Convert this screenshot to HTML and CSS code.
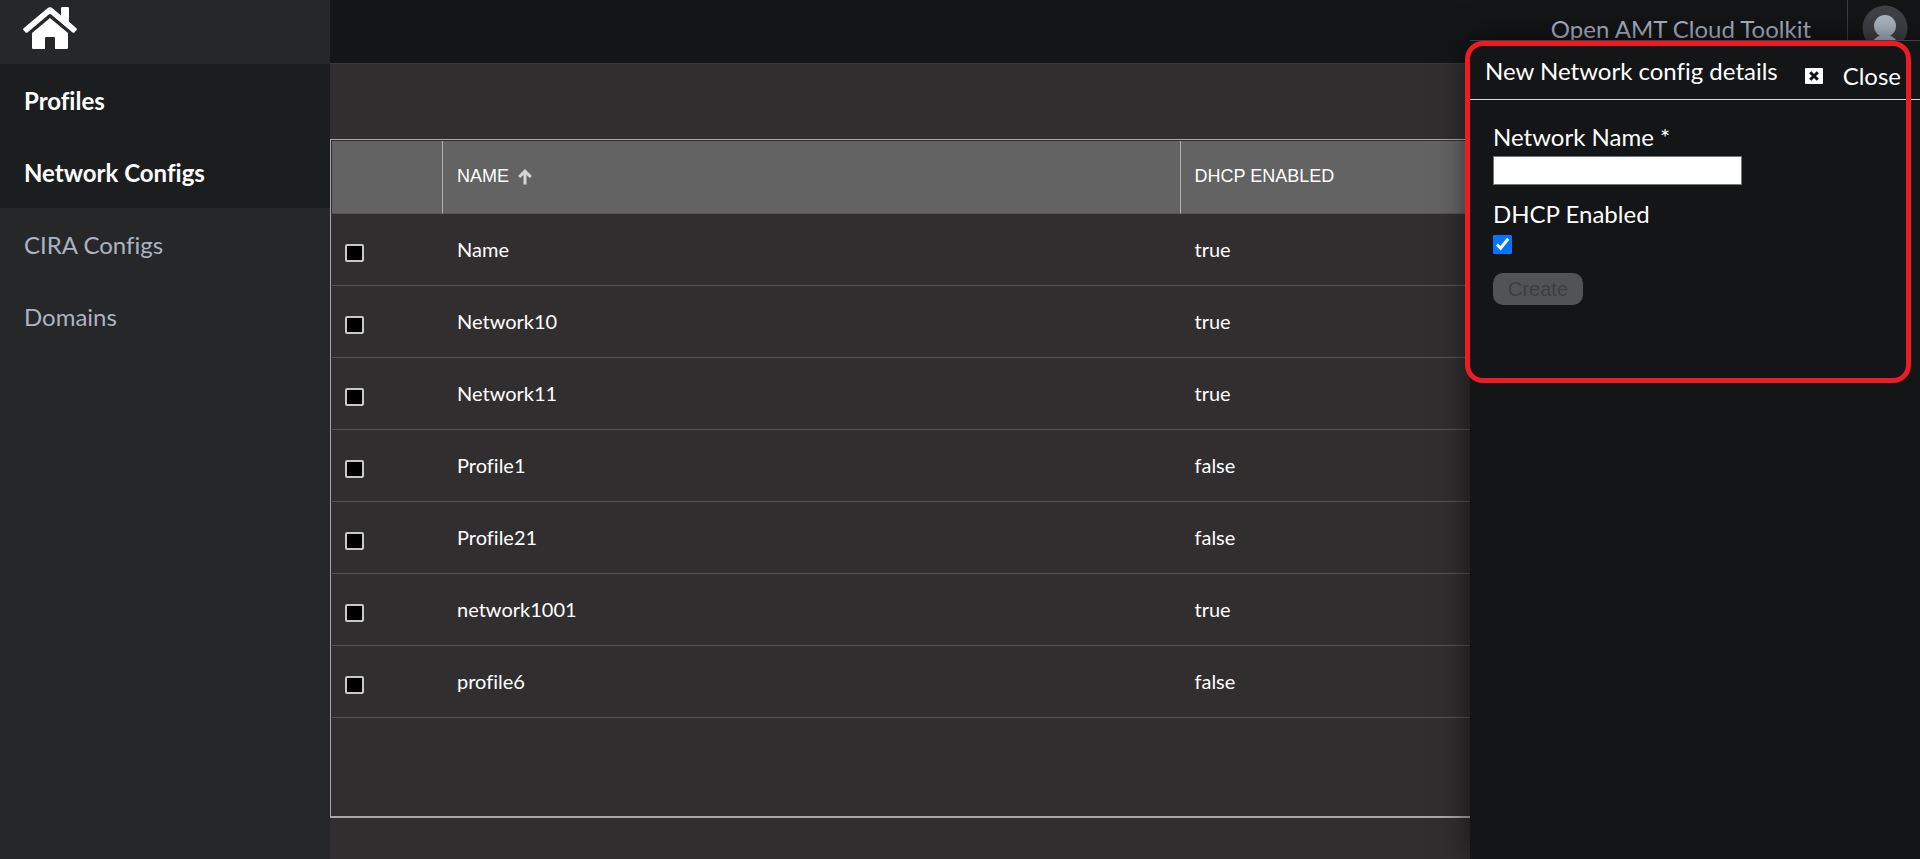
FILE: index.html
```html
<!DOCTYPE html>
<html lang="en">
<head>
<meta charset="utf-8">
<title>Open AMT Cloud Toolkit</title>
<link rel="stylesheet" href="styles.css">
</head>
<body>
<div class="app">
  <aside class="sidebar">
    <a class="home" href="#" aria-label="Home">
      <svg width="54" height="42" viewBox="0 0 54 42" fill="#fff" aria-hidden="true">
        <path d="M0.6 21.2 L24.2 1.4 Q27 -1 29.8 1.4 L38 8.4 V1.2 Q38 0 39.2 0 H44.8 Q46 0 46 1.2 V14.8 L53.4 21.2 Q54.4 22.2 53.4 23.2 L51.4 25.4 Q50.6 26.2 49.6 25.4 L28.2 7.6 Q27 6.6 25.8 7.6 L4.4 25.4 Q3.4 26.2 2.6 25.4 L0.6 23.2 Q-0.4 22.2 0.6 21.2Z"/>
        <path d="M27 11 L45 26 V40.8 Q45 42 43.8 42 H32 V31.4 Q32 30 30.6 30 H23.4 Q22 30 22 31.4 V42 H10.2 Q9 42 9 40.8 V26Z"/>
      </svg>
    </a>
    <nav class="menu">
      <a class="menu-item active" href="#">Profiles</a>
      <a class="menu-item active" href="#">Network Configs</a>
      <a class="menu-item" href="#">CIRA Configs</a>
      <a class="menu-item" href="#">Domains</a>
    </nav>
  </aside>
  <div class="content">
    <header class="topbar">
      <span class="product">Open AMT Cloud Toolkit</span>
      <div class="account">
        <svg width="46" height="46" viewBox="0 0 46 46" aria-hidden="true">
          <circle cx="23" cy="23" r="22.5" fill="#3e4146"/>
          <circle cx="23" cy="21" r="11" fill="#adb8c3"/>
          <path d="M11 36 Q15 30 23 30 Q31 30 35 36 Q30 42 23 42 Q16 42 11 36Z" fill="#adb8c3"/>
        </svg>
      </div>
    </header>
    <main class="main">
      <div class="grid">
        <table class="table">
          <thead>
            <tr>
              <th class="col-check"></th>
              <th class="col-data">NAME
                <svg class="sort" width="14" height="16" viewBox="0 0 14 16" fill="none" stroke="#d6d6d6" stroke-width="3" aria-hidden="true"><path d="M7 15.5V2.5"/><path d="M1.2 8 7 2.2 12.8 8"/></svg>
              </th>
              <th class="col-data">DHCP ENABLED</th>
            </tr>
          </thead>
          <tbody>
            <tr><td><input class="check" type="checkbox" aria-label="Select Name"></td><td>Name</td><td>true</td></tr>
            <tr><td><input class="check" type="checkbox" aria-label="Select Network10"></td><td>Network10</td><td>true</td></tr>
            <tr><td><input class="check" type="checkbox" aria-label="Select Network11"></td><td>Network11</td><td>true</td></tr>
            <tr><td><input class="check" type="checkbox" aria-label="Select Profile1"></td><td>Profile1</td><td>false</td></tr>
            <tr><td><input class="check" type="checkbox" aria-label="Select Profile21"></td><td>Profile21</td><td>false</td></tr>
            <tr><td><input class="check" type="checkbox" aria-label="Select network1001"></td><td>network1001</td><td>true</td></tr>
            <tr><td><input class="check" type="checkbox" aria-label="Select profile6"></td><td>profile6</td><td>false</td></tr>
          </tbody>
        </table>
      </div>
    </main>
  </div>
  <section class="panel">
    <div class="panel-head">
      <h2 class="panel-title">New Network config details</h2>
      <button class="close" type="button">
        <svg width="18" height="16" viewBox="0 0 18 16" aria-hidden="true"><rect width="18" height="16" rx="1" fill="#fff"/><path d="M5.2 4.2l7.6 7.6M12.8 4.2l-7.6 7.6" stroke="#131517" stroke-width="3"/></svg>
        <span>Close</span>
      </button>
    </div>
    <form class="form">
      <label class="label" for="network-name">Network Name *</label>
      <input class="text" id="network-name" type="text">
      <label class="label" for="dhcp">DHCP Enabled</label>
      <input class="dhcp" id="dhcp" type="checkbox" checked>
      <button class="create" type="button" disabled>Create</button>
    </form>
  </section>
  <div class="highlight"></div>
</div>
</body>
</html>
```
FILE: styles.css
```css
* { box-sizing: border-box; }

body {
  margin: 0;
  background: #312e2f;
  color: #fff;
  font-family: Lato, "Noto Sans", sans-serif;
  font-size: 24px;
  font-variant-ligatures: none;
}

.app {
  position: relative;
  display: flex;
  min-height: 100vh;
  overflow: hidden;
}

.sidebar { flex: 0 0 330px; background: #262729; }

.home {
  display: flex;
  height: 64px;
  padding: 7px 23px;
}

.menu { display: flex; flex-direction: column; }

.menu-item {
  padding: 2px 0 0 24px;
  color: #aab4c3;
  line-height: 70px;
  text-decoration: none;
}

.menu-item.active {
  background: #1c1d1f;
  color: #fff;
  font-weight: 700;
}

.content {
  flex: 1;
  display: flex;
  flex-direction: column;
}

.topbar {
  display: flex;
  justify-content: flex-end;
  height: 64px;
  background: #131517;
  border-bottom: 1px solid #3a3a3c;
}

.product {
  padding-right: 36px;
  color: #aab4c3;
  line-height: 58px;
}

.account {
  padding: 5px 12px 0 14px;
  border-left: 1px solid #3a3d40;
}

.main {
  flex: 1;
  display: flex;
  padding: 75px 0 41px;
}

.grid {
  flex: 1;
  padding: 1px 1px 0;
  border: 1px solid #a8a8a8;
  border-bottom-width: 2px;
}

.table {
  width: 100%;
  table-layout: fixed;
  border-collapse: separate;
  border-spacing: 0;
  font-size: 20px;
}

.table th {
  height: 73px;
  padding: 0 14px 2px;
  background: #636363;
  border-right: 1px solid #b0b0b0;
  border-bottom: 1px solid #555;
  font: 400 18px "Liberation Sans", Arial, sans-serif;
  text-align: left;
}

.table th:last-child { border-right: 0; }
.col-check { width: 7%; }

.sort { margin-left: 4px; vertical-align: -3px; }

.table td {
  height: 72px;
  padding: 0 14px 2px;
  border-bottom: 1px solid #555;
}

.table td:first-child { padding: 6px 13px 0; }

.check {
  appearance: none;
  display: block;
  width: 19px;
  height: 18px;
  margin: 0;
  background: #000;
  border: 2px solid #c8c8c8;
  border-radius: 2px;
}

.panel {
  position: absolute;
  top: 40px;
  right: 0;
  bottom: 0;
  width: 450px;
  background: #131517;
  border-top: 1px solid #3e4042;
  box-shadow: 0 0 30px rgba(0, 0, 0, 0.6);
}

.panel-head {
  display: flex;
  justify-content: space-between;
  height: 59px;
  padding: 0 19px 0 15px;
  border-bottom: 1px solid #d8d8d8;
}

.panel-title {
  margin: 0;
  font-size: 24px;
  font-weight: 400;
  line-height: 60px;
}

.close {
  display: flex;
  align-items: center;
  gap: 20px;
  padding: 12px 0 0;
  background: none;
  border: 0;
  color: #fff;
  font: inherit;
  line-height: 38px;
  white-space: nowrap;
}

.form {
  display: flex;
  flex-direction: column;
  align-items: flex-start;
  padding: 20px 23px;
}

.label { padding-bottom: 2px; line-height: 34px; }

.text {
  width: 249px;
  height: 29px;
  margin: 0 0 12px;
  background: #fff;
  border: 1px solid #767676;
}

.dhcp {
  width: 19px;
  height: 19px;
  margin: 2px 0 19px;
  accent-color: #0075ff;
}

.create {
  height: 32px;
  padding: 0 15px;
  background: #525355;
  border: 0;
  border-radius: 10px;
  color: #3d3e40;
  font: 20px "Liberation Sans", Arial, sans-serif;
}

.highlight {
  position: absolute;
  top: 41px;
  right: 9px;
  width: 446px;
  height: 342px;
  border: 5px solid #ed1c24;
  border-radius: 18px;
  pointer-events: none;
}
```
